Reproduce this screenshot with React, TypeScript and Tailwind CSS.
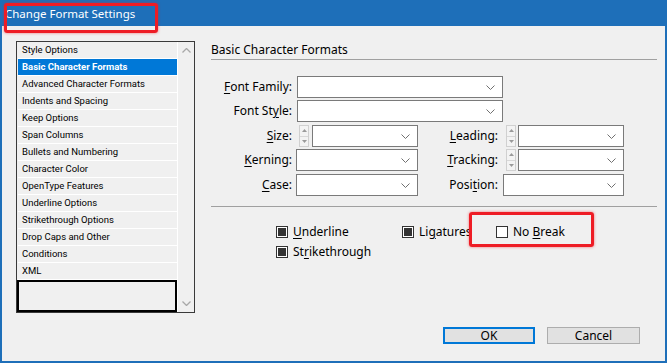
import React from "react";

const ITEMS = [
  "Style Options",
  "Basic Character Formats",
  "Advanced Character Formats",
  "Indents and Spacing",
  "Keep Options",
  "Span Columns",
  "Bullets and Numbering",
  "Character Color",
  "OpenType Features",
  "Underline Options",
  "Strikethrough Options",
  "Drop Caps and Other",
  "Conditions",
  "XML",
];

function Mn({ pre = "", u, post = "" }: { pre?: string; u: string; post?: string }) {
  return (
    <span>
      {pre}
      <span className="underline underline-offset-2">{u}</span>
      {post}
    </span>
  );
}

function Chevron() {
  return (
    <svg width="9" height="5" viewBox="0 0 9 5">
      <path d="M0.5 0.5 L4.5 4.5 L8.5 0.5" fill="none" stroke="#707070" strokeWidth="1" />
    </svg>
  );
}

function Dropdown({ className }: { className: string }) {
  return (
    <div className={`flex h-[22px] items-center justify-end border border-[#7a7a7a] bg-white pr-[7px] ${className}`}>
      <Chevron />
    </div>
  );
}

function Spinner() {
  return (
    <div className="flex h-[22px] w-[10px] flex-col border border-[#d0d0d0] bg-[#f3f3f3]">
      <div className="flex flex-1 items-center justify-center border-b border-[#d8d8d8]">
        <svg width="5" height="3" viewBox="0 0 5 3">
          <path d="M0 3 L2.5 0 L5 3 Z" fill="#9a9a9a" />
        </svg>
      </div>
      <div className="flex flex-1 items-center justify-center">
        <svg width="5" height="3" viewBox="0 0 5 3">
          <path d="M0 0 L2.5 3 L5 0 Z" fill="#9a9a9a" />
        </svg>
      </div>
    </div>
  );
}

function Check({ checked }: { checked: boolean }) {
  return (
    <div className="flex h-[12px] w-[12px] items-center justify-center border border-[#333] bg-white">
      {checked ? <div className="h-[8px] w-[8px] bg-[#333]" /> : null}
    </div>
  );
}

export default function App() {
  return (
    <div className="relative flex h-[363px] w-[667px] flex-col overflow-hidden border-x-2 border-b-2 border-[#1e6fb9] bg-[#f0f0f0] font-['Noto_Sans',sans-serif] text-[12px] text-black">
      <div className="flex h-[26px] shrink-0 items-center bg-[#1e6fb9] pl-[3px] pt-[1px] text-[11.5px] text-white">
        Change Format Settings
      </div>

      {/* annotation box over title */}
      <div className="absolute left-[2px] top-[3px] h-[30px] w-[154px] rounded-[3px] border-[3px] border-[#ee1c25] shadow-[0_0_3px_rgba(238,28,37,0.6)]" />

      <div className="flex flex-1">
        <div className="pl-[14px] pt-[15px]">
          <div className="flex h-[272px] w-[179px] border border-[#3a3a3a]">
            <div className="flex w-[160px] flex-col pl-[1px] font-['Roboto',sans-serif] text-[9.5px]">
              {ITEMS.map((it, i) => (
                <div
                  key={it}
                  className={
                    i === 1
                      ? "flex h-[17px] items-center border-b border-white bg-[#0078d7] pl-[4px] font-bold text-white"
                      : "flex h-[17px] items-center border-b border-white pl-[4px]"
                  }
                >
                  {it}
                </div>
              ))}
              <div className="-ml-[1px] h-[32px] border-2 border-black" />
            </div>
            <div className="flex flex-1 flex-col items-center justify-between border-l border-white py-[6px]">
              <svg width="9" height="5" viewBox="0 0 9 5">
                <path d="M0.5 4.5 L4.5 0.5 L8.5 4.5" fill="none" stroke="#a8a8a8" strokeWidth="1.3" />
              </svg>
              <svg width="9" height="5" viewBox="0 0 9 5">
                <path d="M0.5 0.5 L4.5 4.5 L8.5 0.5" fill="none" stroke="#a8a8a8" strokeWidth="1.3" />
              </svg>
            </div>
          </div>
        </div>

        <div className="ml-[16px] flex flex-1 flex-col pt-[16px]">
          <div className="flex h-[18px] w-[446px] items-center border-b border-[#a0a0a0] pb-[1px]">
            Basic Character Formats
          </div>

          <div className="mt-[16px] flex h-[22px] items-center">
            <div className="w-[81px] text-right"><Mn u="F" post="ont Family:" /></div>
            <Dropdown className="ml-[5px] w-[206px]" />
          </div>
          <div className="mt-[2px] flex h-[22px] items-center">
            <div className="w-[81px] text-right"><Mn pre="Font St" u="y" post="le:" /></div>
            <Dropdown className="ml-[5px] w-[206px]" />
          </div>
          <div className="mt-[3px] flex h-[22px] items-center">
            <div className="w-[81px] text-right"><Mn u="S" post="ize:" /></div>
            <div className="ml-[7px]"><Spinner /></div>
            <Dropdown className="ml-[3px] w-[106px]" />
            <div className="w-[80px] text-right"><Mn u="L" post="eading:" /></div>
            <div className="ml-[8px]"><Spinner /></div>
            <Dropdown className="ml-[2px] w-[106px]" />
          </div>
          <div className="mt-[2px] flex h-[22px] items-center">
            <div className="w-[81px] text-right"><Mn u="K" post="erning:" /></div>
            <Dropdown className="ml-[4px] w-[122px]" />
            <div className="w-[80px] text-right"><Mn u="T" post="racking:" /></div>
            <div className="ml-[8px]"><Spinner /></div>
            <Dropdown className="ml-[2px] w-[106px]" />
          </div>
          <div className="mt-[3px] flex h-[22px] items-center">
            <div className="w-[81px] text-right"><Mn u="C" post="ase:" /></div>
            <Dropdown className="ml-[4px] w-[122px]" />
            <div className="w-[80px] text-right"><Mn pre="Posi" u="t" post="ion:" /></div>
            <Dropdown className="ml-[5px] w-[121px]" />
          </div>

          <div className="mt-[10px] w-[446px] border-t border-[#a0a0a0]" />

          <div className="relative mt-[17px] flex h-[16px] items-center">
            <div className="ml-[65px] flex w-[126px] items-center gap-[5px]">
              <Check checked />
              <Mn u="U" post="nderline" />
            </div>
            <div className="flex w-[94px] items-center gap-[5px]">
              <Check checked />
              <Mn pre="Li" u="g" post="atures" />
            </div>
            <div className="flex items-center gap-[5px]">
              <Check checked={false} />
              <Mn pre="No " u="B" post="reak" />
            </div>
            {/* annotation box around No Break */}
            <div className="absolute left-[258px] top-[-12px] h-[35px] w-[125px] rounded-[3px] border-[3px] border-[#ee1c25] shadow-[0_0_3px_rgba(238,28,37,0.6)]" />
          </div>
          <div className="mt-[4px] flex h-[16px] items-center">
            <div className="ml-[65px] flex items-center gap-[5px]">
              <Check checked />
              <Mn pre="St" u="r" post="ikethrough" />
            </div>
          </div>

          <div className="mt-auto flex justify-end gap-[12px] pb-[17px] pr-[25px]">
            <div className="flex h-[17px] w-[92px] items-center justify-center border-2 border-[#0078d7] bg-[#e1e1e1]">
              OK
            </div>
            <div className="flex h-[17px] w-[93px] items-center justify-center border border-[#adadad] bg-[#e1e1e1]">
              Cancel
            </div>
          </div>
        </div>
      </div>
    </div>
  );
}
